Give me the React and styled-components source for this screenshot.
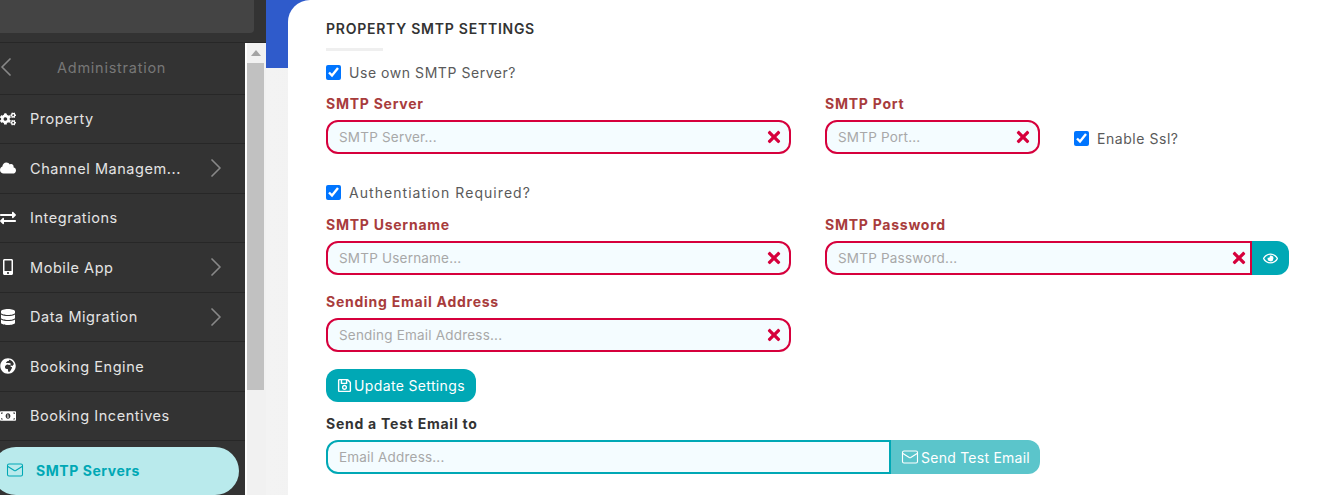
import styled, { createGlobalStyle } from 'styled-components';
import { ChevronLeft, ChevronRight, Mail } from 'lucide-react';
import {
  FaCogs, FaCloud, FaExchangeAlt, FaMobileAlt, FaDatabase, FaGlobeAfrica,
  FaMoneyBillAlt, FaTimes, FaRegEye, FaRegSave,
} from 'react-icons/fa';

const GlobalStyle = createGlobalStyle`
html, body {
  margin: 0;
  padding: 0;
  overflow: hidden;
  background: #fff;
}
* {
  box-sizing: border-box;
}
`

const Page = styled.div`
display: flex;
width: 1320px;
height: 495px;
overflow: hidden;
font-family: Inter, "Liberation Sans", sans-serif;
letter-spacing: 0.55px;
font-size: 14px;
`

const Sidebar = styled.aside`
width: 266px;
flex: none;
display: flex;
flex-direction: column;
background: #333333;
`

const SidebarTop = styled.div`
height: 43px;
flex: none;
padding-bottom: 9px;
padding-right: 12px;
border-bottom: 1px solid #272727;
`

const SearchBox = styled.div`
height: 100%;
background: #444444;
border-bottom-right-radius: 4px;
`

const SidebarBody = styled.div`
flex: 1;
display: flex;
min-height: 0;
`

const Menu = styled.nav`
width: 245px;
flex: none;
`

const MenuHeader = styled.div`
height: 51.5px;
display: flex;
align-items: center;
padding-bottom: 2px;
color: #777777;
border-bottom: 1px solid #272727;
`

const BackChevron = styled(ChevronLeft)`
flex: none;
margin-left: -10px;
`

const HeaderTitle = styled.span`
margin-left: 35px;
font-size: 14.5px;
letter-spacing: 0.75px;
`

const MenuRow = styled.div`
height: 49.5px;
display: flex;
align-items: center;
color: #e4e4e4;
border-bottom: 1px solid #272727;
font-size: 14.5px;
`

const RowIcon = styled.span`
width: 30px;
flex: none;
display: flex;
align-items: center;
font-size: 16px;
color: #fff;
`

const RowLabel = styled.span`
width: 170px;
flex: none;
white-space: nowrap;
`

const RowChevron = styled(ChevronRight)`
flex: none;
`

const ActivePill = styled.div`
height: 48px;
width: 247px;
margin: 6px 0 0 -8px;
padding: 0 0 2px 13.5px;
display: flex;
align-items: center;
gap: 12.5px;
background: #b9eaec;
color: #00a8b5;
font-weight: 700;
font-size: 14px;
border-radius: 24px;
`

const Scrollbar = styled.div`
width: 21px;
flex: none;
background: #f1f1f1;
border-left: 2px solid #fff;
border-right: 2px solid #f1f1f1;
display: flex;
flex-direction: column;
align-items: stretch;
`

const ScrollArrow = styled.div`
height: 20px;
flex: none;
display: flex;
justify-content: center;
padding-top: 7px;
&::before {
  content: "";
  border-left: 5px solid transparent;
  border-right: 5px solid transparent;
  border-bottom: 6px solid #a3a3a3;
  height: 0;
}
`

const ScrollThumb = styled.div`
height: 327px;
background: #c1c1c1;
`

const Main = styled.main`
flex: 1;
min-width: 0;
padding-left: 22px;
background: linear-gradient(#2f5bcb 68px, transparent 68px), linear-gradient(90deg, #f3f3f3, #e5e5e5);
`

const Panel = styled.section`
height: 100%;
background: #fff;
border-top-left-radius: 22px;
padding: 20px 0 0 38px;
color: #333;
`

const Title = styled.h2`
margin: 0;
font-size: 14px;
line-height: 18px;
font-weight: 600;
letter-spacing: 0.75px;
color: #333;
`

const TitleRule = styled.div`
width: 57px;
height: 3px;
margin-top: 10px;
background: #efefef;
`

const CheckRow = styled.label`
display: flex;
align-items: center;
gap: 8px;
height: 18px;
color: #5a5a5a;
margin-top: ${p => p.$top || 0}px;
font-size: 14px;
letter-spacing: ${p => p.$spacing || 0.55}px;
`

const Check = styled.input.attrs({ type: 'checkbox' })`
width: 15px;
height: 15px;
margin: 1px 0 0;
accent-color: #0075ff;
flex: none;
`

const FormGrid = styled.div`
display: grid;
grid-template-columns: 465px 215px 215px;
column-gap: 34px;
margin-top: ${p => p.$top}px;
`

const Field = styled.div`
grid-column: ${p => p.$span ? `span ${p.$span}` : 'auto'};
`

const SslCell = styled.div`
display: flex;
align-items: center;
padding-top: 26px;
height: 60px;
`

const FieldLabel = styled.div`
height: 18px;
line-height: 18px;
margin-bottom: 7px;
font-weight: 700;
font-size: 14px;
letter-spacing: 0.75px;
color: ${p => p.$plain ? '#333' : '#a83c3c'};
`

const InputWrap = styled.div`
position: relative;
display: flex;
height: 34px;
`

const TextInput = styled.input`
flex: 1;
min-width: 0;
height: 34px;
padding: 0 36px 0 11px;
border: 2px solid ${p => p.$teal ? '#00a8b5' : '#d6003c'};
border-radius: ${p => p.$joined ? '12px 0 0 12px' : '12px'};
background: #f4fcff;
font: inherit;
font-size: 13.5px;
letter-spacing: 0.2px;
outline: none;
&::placeholder {
  color: #a8a8a8;
  opacity: 1;
}
`

const ClearIcon = styled.span`
position: absolute;
right: ${p => p.$right || 8}px;
top: 8px;
display: flex;
font-size: 18px;
color: #d6003c;
`

const AddonButton = styled.button`
flex: none;
width: ${p => p.$width}px;
height: 34px;
border: none;
border-radius: 0 12px 12px 0;
background: ${p => p.$light ? '#5bc5cb' : '#00a8b5'};
color: #fff;
font: inherit;
font-size: 14px;
letter-spacing: 0.25px;
display: flex;
align-items: center;
justify-content: center;
gap: 2px;
padding: 0;
`

const SaveButton = styled.button`
display: flex;
align-items: center;
justify-content: center;
gap: 2px;
width: 150px;
height: 33px;
margin-top: 17px;
padding: 0;
border: none;
border-radius: 12px;
background: #00a8b5;
color: #fff;
font: inherit;
font-size: 14px;
letter-spacing: 0.35px;
`

const TestRow = styled.div`
width: 714px;
margin-top: 13px;
`

const menuItems = [
  { label: 'Property', icon: <FaCogs /> },
  { label: 'Channel Managem...', icon: <FaCloud />, more: true },
  { label: 'Integrations', icon: <FaExchangeAlt /> },
  { label: 'Mobile App', icon: <FaMobileAlt />, more: true },
  { label: 'Data Migration', icon: <FaDatabase />, more: true },
  { label: 'Booking Engine', icon: <FaGlobeAfrica /> },
  { label: 'Booking Incentives', icon: <FaMoneyBillAlt /> },
]

function App() {
  return (
    <Page>
      <GlobalStyle />
      <Sidebar>
        <SidebarTop>
          <SearchBox />
        </SidebarTop>
        <SidebarBody>
          <Menu>
            <MenuHeader>
              <BackChevron size={32} strokeWidth={1.3} color="#888" />
              <HeaderTitle>Administration</HeaderTitle>
            </MenuHeader>
            {menuItems.map(item => (
              <MenuRow key={item.label}>
                <RowIcon>{item.icon}</RowIcon>
                <RowLabel>{item.label}</RowLabel>
                {item.more && <RowChevron size={32} strokeWidth={1.3} color="#888" />}
              </MenuRow>
            ))}
            <ActivePill>
              <Mail size={18} strokeWidth={1.4} />
              <span>SMTP Servers</span>
            </ActivePill>
          </Menu>
          <Scrollbar>
            <ScrollArrow />
            <ScrollThumb />
          </Scrollbar>
        </SidebarBody>
      </Sidebar>
      <Main>
        <Panel>
          <Title>PROPERTY SMTP SETTINGS</Title>
          <TitleRule />
          <CheckRow $top={12}>
            <Check defaultChecked />
            Use own SMTP Server?
          </CheckRow>
          <FormGrid $top={14}>
            <Field>
              <FieldLabel>SMTP Server</FieldLabel>
              <InputWrap>
                <TextInput placeholder="SMTP Server..." />
                <ClearIcon><FaTimes /></ClearIcon>
              </InputWrap>
            </Field>
            <Field>
              <FieldLabel>SMTP Port</FieldLabel>
              <InputWrap>
                <TextInput placeholder="SMTP Port..." />
                <ClearIcon><FaTimes /></ClearIcon>
              </InputWrap>
            </Field>
            <SslCell>
              <CheckRow>
                <Check defaultChecked />
                Enable Ssl?
              </CheckRow>
            </SslCell>
          </FormGrid>
          <CheckRow $top={28} $spacing={1.05}>
            <Check defaultChecked />
            Authentiation Required?
          </CheckRow>
          <FormGrid $top={15}>
            <Field>
              <FieldLabel>SMTP Username</FieldLabel>
              <InputWrap>
                <TextInput placeholder="SMTP Username..." />
                <ClearIcon><FaTimes /></ClearIcon>
              </InputWrap>
            </Field>
            <Field $span={2}>
              <FieldLabel>SMTP Password</FieldLabel>
              <InputWrap>
                <TextInput $joined placeholder="SMTP Password..." />
                <ClearIcon $right={41}><FaTimes /></ClearIcon>
                <AddonButton $width={37}><FaRegEye size={15} /></AddonButton>
              </InputWrap>
            </Field>
          </FormGrid>
          <FormGrid $top={18}>
            <Field>
              <FieldLabel>Sending Email Address</FieldLabel>
              <InputWrap>
                <TextInput placeholder="Sending Email Address..." />
                <ClearIcon><FaTimes /></ClearIcon>
              </InputWrap>
            </Field>
          </FormGrid>
          <SaveButton><FaRegSave size={15} />Update Settings</SaveButton>
          <TestRow>
            <FieldLabel $plain>Send a Test Email to</FieldLabel>
            <InputWrap>
              <TextInput $teal $joined placeholder="Email Address..." />
              <AddonButton $light $width={149}><Mail size={18} strokeWidth={1.5} />Send Test Email</AddonButton>
            </InputWrap>
          </TestRow>
        </Panel>
      </Main>
    </Page>
  );
}

export default App;
